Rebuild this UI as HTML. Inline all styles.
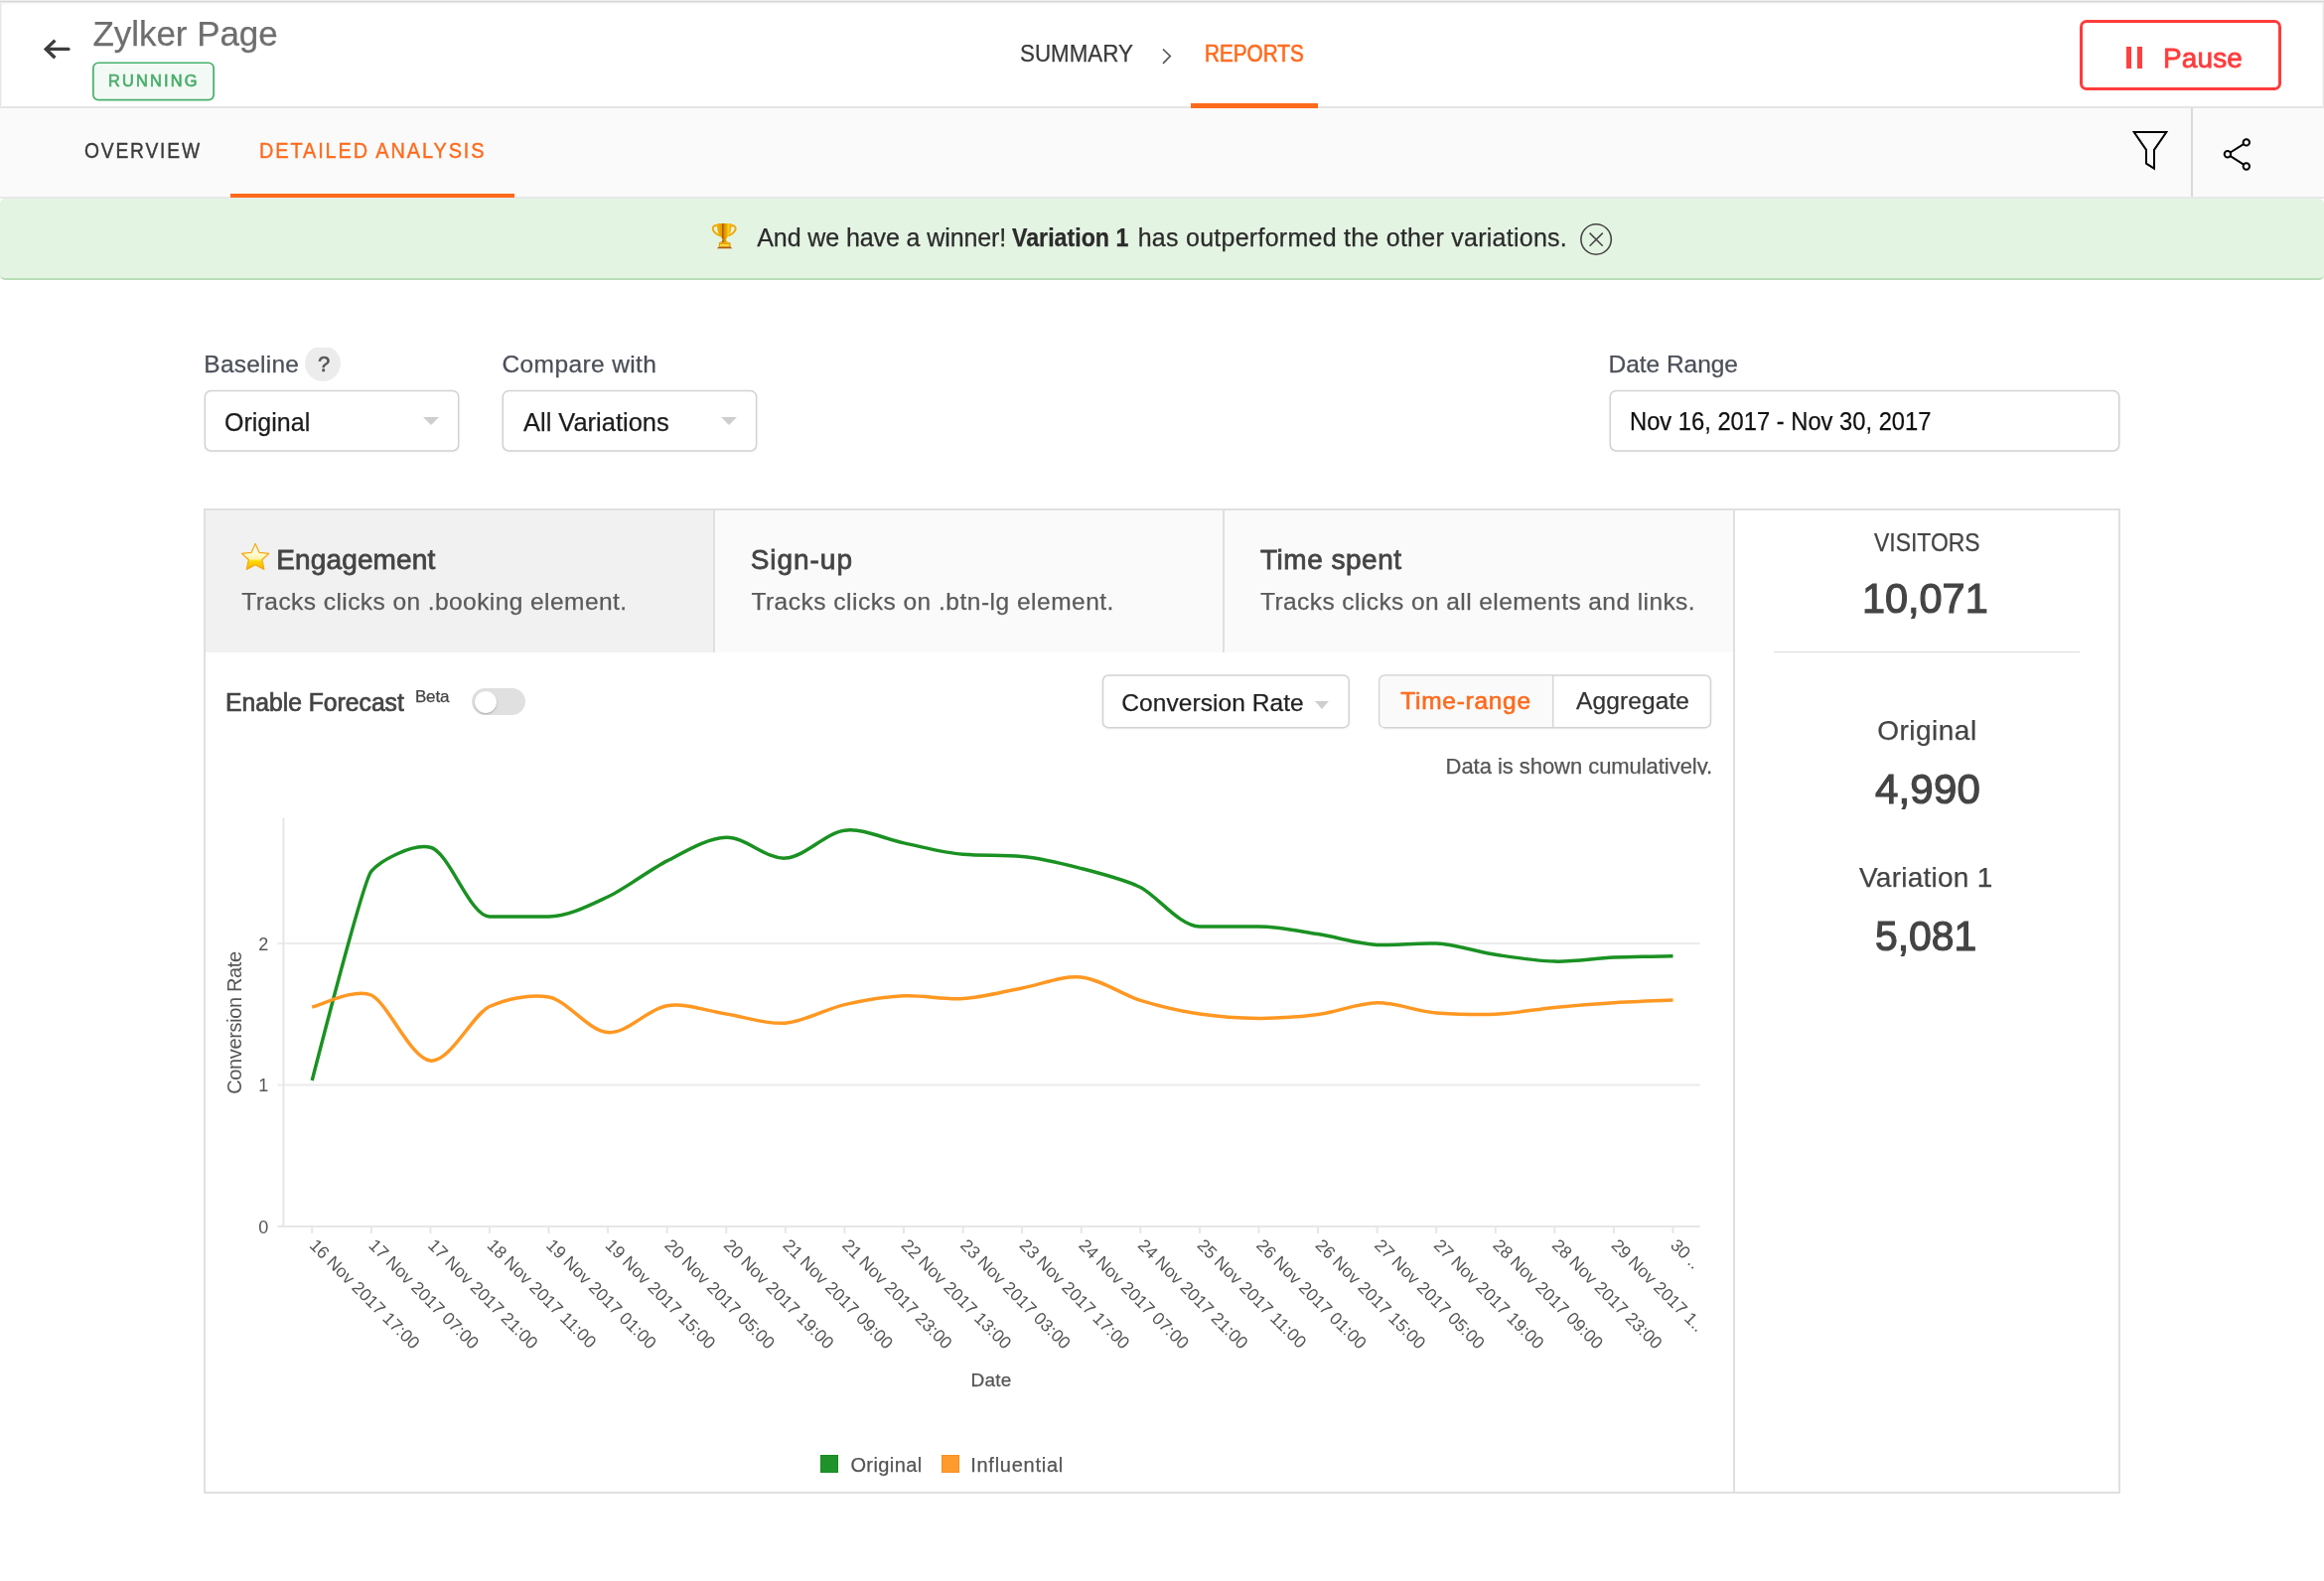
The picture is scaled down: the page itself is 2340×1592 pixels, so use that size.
<!DOCTYPE html>
<html lang="en">
<head>
<meta charset="utf-8">
<title>Zylker Page - Reports</title>
<style>
html,body{margin:0;padding:0;}
body{will-change:transform;width:2340px;height:1592px;position:relative;overflow:hidden;background:#fff;font-family:"Liberation Sans",Arial,sans-serif;}
.t{position:absolute;white-space:nowrap;line-height:1;transform-origin:0 50%;-webkit-text-stroke:0.25px currentColor;}
.m{-webkit-text-stroke:0.75px currentColor;}
.abs{position:absolute;}
header{position:absolute;left:0;top:0;width:2340px;height:107px;background:#fff;}
.topline{position:absolute;left:0;top:0;width:2340px;height:5px;background:linear-gradient(to bottom,#efefef 0,#efefef 1px,#d5d5d5 1px,#d5d5d5 2px,#ebebeb 2px,#ebebeb 3px,#f8f8f8 3px,#f8f8f8 4px,#fdfdfd 4px);}
.leftline{position:absolute;left:0;top:2px;width:2px;height:106px;background:linear-gradient(to right,#e6e6e6 0,#e6e6e6 1px,#f6f6f6 1px);}
.rightline{position:absolute;left:2338px;top:2px;width:2px;height:106px;background:linear-gradient(to left,#e6e6e6 0,#e6e6e6 1px,#f6f6f6 1px);}
.hborder{position:absolute;left:0;top:107px;width:2340px;height:2px;background:#e4e4e4;}
.hl{position:absolute;background:#ff6a1c;}
.pausebtn{position:absolute;left:2094px;top:20px;width:197px;height:65px;border:3px solid #ff3b3b;border-radius:7px;background:#fff;}
.pbar{position:absolute;top:47.2px;width:5px;height:21.5px;background:#ff4040;}
nav.sub{position:absolute;left:0;top:109px;width:2340px;height:89px;background:#fafafa;}
.subborder{position:absolute;left:0;top:198px;width:2340px;height:1.5px;background:#e8e8e8;}
.vdiv{position:absolute;left:2206px;top:109px;width:2px;height:89px;background:#d9d9d9;}
.banner{position:absolute;left:0;top:199.5px;width:2340px;height:80.5px;background:#e4f4e3;border-bottom:2px solid #b9deb6;border-radius:5px;}
.sel{position:absolute;box-sizing:border-box;border:2px solid #dcdcdc;border-radius:7px;background:#fff;box-shadow:0 1px 2px rgba(0,0,0,.06);}
.caret{position:absolute;width:0;height:0;border-left:8px solid transparent;border-right:8px solid transparent;border-top:8.5px solid #cecece;}
.qc{position:absolute;left:307px;top:350.4px;width:36px;height:34px;overflow:hidden;}
.qc i{position:absolute;left:0;top:-2.4px;width:36px;height:36px;border-radius:50%;background:#ececec;}
.card{position:absolute;left:205px;top:512px;width:1926px;height:988px;border:2px solid #e0e0df;background:#fff;}
.tab{position:absolute;top:514px;height:143px;background:#fafafa;}
.tab.on{background:#f1f1f1;}
.tdiv{position:absolute;width:2px;background:#e0e0df;}
.hr{position:absolute;left:1786px;top:655.5px;width:308px;height:1.5px;background:#dcdcdc;}
.toggle{position:absolute;left:475px;top:692.5px;width:54px;height:27px;border-radius:14px;background:#e0e0e0;}
.knob{position:absolute;left:478px;top:695.8px;width:22.4px;height:22.4px;border-radius:50%;background:#fff;box-shadow:0 1px 2px rgba(0,0,0,.25);}
.bgroup{position:absolute;left:1388px;top:679px;width:335px;height:55px;box-sizing:border-box;border:2px solid #dcdcdc;border-radius:6px;background:#fff;overflow:hidden;box-shadow:0 1px 2px rgba(0,0,0,.05);}
.bgroup .on{position:absolute;left:0;top:0;width:172.5px;height:51px;background:#fafafa;border-right:2px solid #dcdcdc;}
.clip{position:absolute;left:1440px;top:750px;width:300px;height:29.5px;overflow:hidden;}
svg.chart{position:absolute;left:207px;top:780px;}
.lg{position:absolute;top:1465.2px;width:16px;height:16px;border:1px solid;}
svg.ico{position:absolute;left:0;top:0;overflow:visible;}
svg.boxes{filter:drop-shadow(0 1px 0.8px rgba(0,0,0,.04));}
</style>
</head>
<body>

<header>
  <svg class="ico" width="120" height="108" viewBox="0 0 120 108"><path d="M55.4 40.6 L46.3 49.4 L55.4 58.2" fill="none" stroke="#3d3d3d" stroke-width="3.4" stroke-linecap="butt" stroke-linejoin="miter"/><path d="M47 49.4 H68.9" fill="none" stroke="#3d3d3d" stroke-width="3.4" stroke-linecap="round"/></svg>
  <h1 style="margin:0;font-weight:normal"><span class="t" style="left:93.5px;top:16px;font-size:35px;color:#6e6e6e;letter-spacing:-0.05px;">Zylker Page</span></h1>
  <svg class="ico" width="300" height="108"><rect x="93.85" y="63.25" width="121.3" height="37.3" rx="5.2" fill="#f3f9f4" stroke="#47b06b" stroke-width="1.7"/></svg><span class="t" style="left:109.1px;top:73px;font-size:16.5px;color:#46ae69;letter-spacing:2.20px;transform:scaleX(0.9914);-webkit-text-stroke-width:0.65px;">RUNNING</span>
  <nav>
    <span class="t" style="left:1026.5px;top:43px;font-size:23.5px;color:#3a3a3a;transform:scaleX(0.9511);">SUMMARY</span>
    <svg class="ico" width="2340" height="108"><path d="M1171 49.5 L1178.2 56.5 L1171 63.8" fill="none" stroke="#555" stroke-width="1.7"/></svg>
    <span class="t" style="left:1212.8px;top:43px;font-size:23.5px;color:#ff6a1c;transform:scaleX(0.8816);-webkit-text-stroke-width:0.6px;">REPORTS</span>
    <div class="hl" style="left:1199px;top:104px;width:128px;height:5px;z-index:3"></div>
  </nav>
  <div class="pausebtn"></div>
  <div class="pbar" style="left:2140.9px"></div><div class="pbar" style="left:2152px"></div>
  <span class="t m" style="left:2178.0px;top:45px;font-size:28px;color:#ff3b3b;letter-spacing:0.12px;-webkit-text-stroke-width:0.78px;">Pause</span>
</header>
<div class="hborder"></div>
<div class="topline"></div>
<div class="leftline"></div><div class="rightline"></div>

<nav class="sub"></nav>
<div class="subborder"></div>
<span class="t" style="left:85.3px;top:141px;font-size:22px;color:#3a3a3a;letter-spacing:2.10px;transform:scaleX(0.8735);-webkit-text-stroke-width:0.4px;">OVERVIEW</span><span class="t" style="left:260.7px;top:141px;font-size:22px;color:#ff6a1c;letter-spacing:2.10px;transform:scaleX(0.9045);-webkit-text-stroke-width:0.4px;">DETAILED ANALYSIS</span>
<div class="hl" style="left:232px;top:194.5px;width:286px;height:4px"></div>
<div class="vdiv"></div>
<svg class="ico" width="2340" height="200">
  <path d="M2148.7 133 H2181.3 L2169 150.9 V169.6 L2161 164.6 V150.9 Z" fill="none" stroke="#000" stroke-width="2" stroke-linejoin="miter"/>
  <g fill="none" stroke="#000" stroke-width="2">
    <path d="M2259 145.1 L2245.7 153.5 M2245.7 157.1 L2259 165.7"/>
    <circle cx="2261.8" cy="143.4" r="3.2"/><circle cx="2242.9" cy="155.3" r="3.2"/><circle cx="2261.8" cy="167.5" r="3.2"/>
  </g>
</svg>

<section class="banner"></section>
<svg class="ico" width="2340" height="300">
  <defs>
    <linearGradient id="cup" x1="0" x2="1" y1="0" y2="0"><stop offset="0" stop-color="#f4b400"/><stop offset=".33" stop-color="#e79c00"/><stop offset=".4" stop-color="#8f4500"/><stop offset=".47" stop-color="#d88c00"/><stop offset=".62" stop-color="#e9a200"/><stop offset=".8" stop-color="#ffcd1c"/><stop offset="1" stop-color="#eca600"/></linearGradient>
    <linearGradient id="base" x1="0" x2="0" y1="0" y2="1"><stop offset="0" stop-color="#e39a00"/><stop offset=".45" stop-color="#ffd43a"/><stop offset="1" stop-color="#a84a00"/></linearGradient>
    <linearGradient id="star" x1="0" x2="0" y1="0" y2="1"><stop offset="0" stop-color="#fffef4"/><stop offset=".45" stop-color="#fffbcc"/><stop offset=".6" stop-color="#fff3a2"/><stop offset=".67" stop-color="#ffda00"/><stop offset=".85" stop-color="#ffc600"/><stop offset="1" stop-color="#f3a300"/></linearGradient>
  </defs>
  <g>
    <path d="M722.6 227.4 C719.6 226.3 717.1 228.2 717.8 230.9 C718.5 233.5 721.2 235.7 724.8 237.2" fill="none" stroke="#efa800" stroke-width="1.9" stroke-linecap="round"/>
    <path d="M735.8 227.4 C738.8 226.3 741.3 228.2 740.6 230.9 C739.9 233.5 737.2 235.7 733.6 237.2" fill="none" stroke="#efa800" stroke-width="1.9" stroke-linecap="round"/>
    <path d="M722.1 225 H736.3 C736.6 230.6 736.1 234.6 733.7 237.4 C732.4 238.9 731.3 239.9 731 241.2 C730.9 242.4 732.6 243.5 735.2 244.4 H723.8 C726.2 243.5 727.7 242.4 727.5 241.2 C727.2 239.9 726.1 238.9 724.8 237.4 C722.4 234.6 721.9 230.6 722.1 225 Z" fill="url(#cup)"/>
    <path d="M723.8 244.3 H735.5 V248.5 H723.8 Z" fill="#e99e00"/>
    <path d="M725 245.9 H734 V248.3 H725 Z" fill="#ffd838"/>
    <path d="M723.6 248.4 H735.7 L737.3 250.3 H721.8 Z" fill="#b25a00"/>
  </g>
  <g fill="none" stroke="#454545" stroke-width="1.6">
    <circle cx="1607.1" cy="241" r="15.2"/>
    <path d="M1600.6 234.6 L1613.8 247.8 M1613.8 234.6 L1600.6 247.8" stroke-width="1.5"/>
  </g>
</svg>
<span class="t" style="left:762.3px;top:227px;font-size:25px;color:#2b2b2b;letter-spacing:-0.10px;">And we have a winner!</span><span class="t" style="left:1019.3px;top:227px;font-size:25px;color:#2b2b2b;transform:scaleX(0.9286);font-weight:700;">Variation 1</span><span class="t" style="left:1145.7px;top:227px;font-size:25px;color:#2b2b2b;letter-spacing:0.26px;">has outperformed the other variations.</span>

<main>
<svg class="ico boxes" width="2340" height="800">
    <g fill="#fff" stroke="#d2d2d2" stroke-width="1.5">
      <rect x="206.4" y="393.5" width="255.3" height="60.4" rx="6"/>
      <rect x="506.3" y="393.5" width="255.3" height="60.4" rx="6"/>
      <rect x="1621.3" y="393.5" width="512.4" height="60.4" rx="6"/>
    </g>
  </svg>
  <span class="t" style="left:205.3px;top:355px;font-size:24.5px;color:#4a4f58;letter-spacing:0.24px;">Baseline</span><div class="qc"><i></i></div><span class="t" style="left:319.9px;top:356px;font-size:22px;color:#555;-webkit-text-stroke-width:0.6px;">?</span>
  <span class="t" style="left:505.5px;top:355px;font-size:24.5px;color:#4a4f58;letter-spacing:0.39px;">Compare with</span><span class="t" style="left:1619.5px;top:355px;font-size:24.5px;color:#4a4f58;letter-spacing:-0.03px;">Date Range</span>
  <span class="t" style="left:225.8px;top:412px;font-size:26px;color:#1c1c1c;transform:scaleX(0.9623);">Original</span>
  <div class="caret" style="left:426px;top:419.5px"></div>
  <span class="t" style="left:526.9px;top:412px;font-size:26px;color:#1c1c1c;transform:scaleX(0.9793);">All Variations</span>
  <div class="caret" style="left:726px;top:419.5px"></div>
  <span class="t" style="left:1640.8px;top:412px;font-size:25px;color:#111;transform:scaleX(0.9493);">Nov 16, 2017 - Nov 30, 2017</span>

  <div class="card"></div>
  <div class="tab on" style="left:207px;width:511px"></div>
  <div class="tab" style="left:720px;width:511px"></div>
  <div class="tab" style="left:1233px;width:512px"></div>
  <div class="tdiv" style="left:718px;top:514px;height:143px"></div>
  <div class="tdiv" style="left:1231px;top:514px;height:143px"></div>
  <div class="tdiv" style="left:1745px;top:514px;height:988px"></div>
  <svg class="ico" width="400" height="600"><path d="M257.1 547.4 L261 556.3 L270.7 557.3 L263.9 563.8 L265.9 573.4 L257.1 568.8 L248.3 573.4 L250.3 563.8 L243.5 557.3 L253.2 556.3 Z" fill="url(#star)" stroke="#f6a712" stroke-width="1.2" stroke-linejoin="round"/></svg>
  <span class="t m" style="left:278.3px;top:550px;font-size:28px;color:#444;letter-spacing:0.13px;-webkit-text-stroke-width:0.78px;">Engagement</span><span class="t" style="left:243.3px;top:594px;font-size:24.5px;color:#5a5a5a;letter-spacing:0.43px;">Tracks clicks on .booking element.</span><span class="t m" style="left:755.7px;top:550px;font-size:28px;color:#444;letter-spacing:0.96px;-webkit-text-stroke-width:0.78px;">Sign-up</span><span class="t" style="left:756.4px;top:594px;font-size:24.5px;color:#5a5a5a;letter-spacing:0.50px;">Tracks clicks on .btn-lg element.</span><span class="t m" style="left:1269.0px;top:550px;font-size:28px;color:#444;letter-spacing:0.51px;-webkit-text-stroke-width:0.78px;">Time spent</span><span class="t" style="left:1269.0px;top:594px;font-size:24.5px;color:#5a5a5a;letter-spacing:0.42px;">Tracks clicks on all elements and links.</span>

  <aside>
    <span class="t" style="left:1887.2px;top:534px;font-size:25px;color:#444;transform:scaleX(0.9173);">VISITORS</span><span class="t m" style="left:1875.0px;top:582px;font-size:42px;color:#444;transform:scaleX(0.9863);-webkit-text-stroke-width:1.18px;">10,071</span><div class="hr"></div><span class="t" style="left:1890.2px;top:722px;font-size:28px;color:#444;letter-spacing:0.49px;">Original</span><span class="t m" style="left:1887.9px;top:774px;font-size:42px;color:#444;letter-spacing:0.21px;-webkit-text-stroke-width:1.18px;">4,990</span><span class="t" style="left:1872.0px;top:870px;font-size:28px;color:#444;letter-spacing:0.25px;">Variation 1</span><span class="t m" style="left:1887.9px;top:922px;font-size:42px;color:#444;transform:scaleX(0.9733);-webkit-text-stroke-width:1.18px;">5,081</span>
  </aside>

  <svg class="ico boxes" width="2340" height="800">
    <g fill="#fff" stroke="#d2d2d2" stroke-width="1.5">
      <rect x="1110.5" y="680" width="247.7" height="52.7" rx="5.5"/>
      <rect x="1388.8" y="680" width="333.6" height="52.7" rx="5.5"/>
    </g>
    <path d="M1394.3 680.75 H1563 V731.95 H1394.3 Q1389.55 731.95 1389.55 727.2 V685.5 Q1389.55 680.75 1394.3 680.75 Z" fill="#fafafa"/>
    <path d="M1563.7 680 V732.7" stroke="#d6d6d6" stroke-width="1.5"/>
  </svg>
  <span class="t m" style="left:227.3px;top:695px;font-size:25px;color:#444;transform:scaleX(0.9878);-webkit-text-stroke-width:0.70px;">Enable Forecast</span><span class="t" style="left:417.9px;top:693px;font-size:17px;color:#444;letter-spacing:-0.14px;">Beta</span>
  <div class="toggle"></div><div class="knob"></div>
  <span class="t" style="left:1129.3px;top:696px;font-size:24.5px;color:#222;letter-spacing:0.06px;">Conversion Rate</span>
  <div class="caret" style="left:1323.5px;top:705.5px;border-left-width:7.7px;border-right-width:7.7px;border-top-width:8px"></div>
  <span class="t" style="left:1410.3px;top:694px;font-size:24.5px;color:#ff6a1c;letter-spacing:0.71px;-webkit-text-stroke-width:0.6px;">Time-range</span><span class="t" style="left:1587.1px;top:694px;font-size:24.5px;color:#333;letter-spacing:0.10px;">Aggregate</span>
  <div class="clip"><div style="position:absolute;left:-1440px;top:-750px"><span class="t" style="left:1455.6px;top:761px;font-size:22px;color:#555;letter-spacing:-0.05px;">Data is shown cumulatively.</span></div></div>

<svg class="chart" width="1538" height="722" viewBox="207 780 1538 722" font-family="Liberation Sans, Arial, sans-serif">
<g stroke="#ebebeb" stroke-width="2" fill="none">
<line x1="279.4" y1="1092.5" x2="1711.6" y2="1092.5"/>
<line x1="279.4" y1="950.1" x2="1711.6" y2="950.1"/>
</g>
<g stroke="#e6e6e6" stroke-width="2" fill="none">
<path d="M285.4,823.4 V1234.9 H1711.6"/>
<line x1="279.4" y1="1234.9" x2="285.4" y2="1234.9"/>
<line x1="314.2" y1="1234.9" x2="314.2" y2="1241.9"/>
<line x1="373.8" y1="1234.9" x2="373.8" y2="1241.9"/>
<line x1="433.4" y1="1234.9" x2="433.4" y2="1241.9"/>
<line x1="492.9" y1="1234.9" x2="492.9" y2="1241.9"/>
<line x1="552.5" y1="1234.9" x2="552.5" y2="1241.9"/>
<line x1="612.1" y1="1234.9" x2="612.1" y2="1241.9"/>
<line x1="671.7" y1="1234.9" x2="671.7" y2="1241.9"/>
<line x1="731.2" y1="1234.9" x2="731.2" y2="1241.9"/>
<line x1="790.8" y1="1234.9" x2="790.8" y2="1241.9"/>
<line x1="850.4" y1="1234.9" x2="850.4" y2="1241.9"/>
<line x1="910.0" y1="1234.9" x2="910.0" y2="1241.9"/>
<line x1="969.6" y1="1234.9" x2="969.6" y2="1241.9"/>
<line x1="1029.1" y1="1234.9" x2="1029.1" y2="1241.9"/>
<line x1="1088.7" y1="1234.9" x2="1088.7" y2="1241.9"/>
<line x1="1148.3" y1="1234.9" x2="1148.3" y2="1241.9"/>
<line x1="1207.9" y1="1234.9" x2="1207.9" y2="1241.9"/>
<line x1="1267.5" y1="1234.9" x2="1267.5" y2="1241.9"/>
<line x1="1327.0" y1="1234.9" x2="1327.0" y2="1241.9"/>
<line x1="1386.6" y1="1234.9" x2="1386.6" y2="1241.9"/>
<line x1="1446.2" y1="1234.9" x2="1446.2" y2="1241.9"/>
<line x1="1505.8" y1="1234.9" x2="1505.8" y2="1241.9"/>
<line x1="1565.3" y1="1234.9" x2="1565.3" y2="1241.9"/>
<line x1="1624.9" y1="1234.9" x2="1624.9" y2="1241.9"/>
<line x1="1684.5" y1="1234.9" x2="1684.5" y2="1241.9"/>
</g>
<path d="M314.2,1088C314.9,1085.4,365.6,887.2,373.8,877.4S414.5,848.9,433.4,853.3S473.1,922.9,492.9,922.9S532.7,922.9,552.5,922.9S595.8,910.6,612.1,903S655.8,874.9,671.7,866.9S711.4,843.7,731.2,843.2S771,865.3,790.8,864.1S830.9,838.7,850.4,836.2S890.9,845,910,848.9S949.8,858.8,969.6,860.3S1009.4,860.9,1029.1,862.5S1070.1,869.7,1088.7,874.5S1132.3,885.6,1148.3,893.5S1188,933,1207.9,933S1247.6,933,1267.5,933S1307.6,937.6,1327,940.6S1366.8,950.5,1386.6,951.4S1426.4,949.2,1446.2,950.1S1486.3,958.4,1505.8,961.3S1545.5,967.6,1565.3,968.1S1605.1,965,1624.9,964.1S1674.6,963,1684.5,962.8" fill="none" stroke="#1a9122" stroke-width="3.5"/>
<path d="M314.2,1014C323.7,1012.1,357.3,994.5,373.8,1002S413.7,1066.2,433.4,1068.1S476.3,1020.9,492.9,1013.5S533.3,1000.5,552.5,1004S592.3,1038.2,612.1,1039.6S652.3,1015.7,671.7,1012.7S711.8,1018.1,731.2,1021S771.1,1031.8,790.8,1030.2S831.5,1015.9,850.4,1011.6S890.2,1003.8,910,1002.8S949.8,1006.8,969.6,1005.5S1009.9,998.5,1029.1,995S1069.1,982,1088.7,984S1130.2,1001.8,1148.3,1007.4S1188.5,1018.1,1207.9,1021S1247.6,1025.3,1267.5,1025.4S1307.5,1024.2,1327,1021.6S1366.8,1010,1386.6,1009.7S1426.4,1018.7,1446.2,1019.9S1485.9,1021.8,1505.8,1021.2S1545.7,1016.3,1565.3,1014.4S1605.1,1010.9,1624.9,1009.7S1674.6,1007.4,1684.5,1007" fill="none" stroke="#ff9822" stroke-width="3.5"/>
<g fill="#555" font-size="18">
<text x="270.3" y="1241.6" text-anchor="end">0</text>
<text x="270.3" y="1099.2" text-anchor="end">1</text>
<text x="270.3" y="956.8" text-anchor="end">2</text>
</g>
<g fill="#555" font-size="17.5">
<text transform="translate(310.7,1254.9) rotate(45)">16 Nov 2017 17:00</text>
<text transform="translate(370.3,1254.9) rotate(45)">17 Nov 2017 07:00</text>
<text transform="translate(429.9,1254.9) rotate(45)">17 Nov 2017 21:00</text>
<text transform="translate(489.4,1254.9) rotate(45)">18 Nov 2017 11:00</text>
<text transform="translate(549.0,1254.9) rotate(45)">19 Nov 2017 01:00</text>
<text transform="translate(608.6,1254.9) rotate(45)">19 Nov 2017 15:00</text>
<text transform="translate(668.2,1254.9) rotate(45)">20 Nov 2017 05:00</text>
<text transform="translate(727.7,1254.9) rotate(45)">20 Nov 2017 19:00</text>
<text transform="translate(787.3,1254.9) rotate(45)">21 Nov 2017 09:00</text>
<text transform="translate(846.9,1254.9) rotate(45)">21 Nov 2017 23:00</text>
<text transform="translate(906.5,1254.9) rotate(45)">22 Nov 2017 13:00</text>
<text transform="translate(966.1,1254.9) rotate(45)">23 Nov 2017 03:00</text>
<text transform="translate(1025.6,1254.9) rotate(45)">23 Nov 2017 17:00</text>
<text transform="translate(1085.2,1254.9) rotate(45)">24 Nov 2017 07:00</text>
<text transform="translate(1144.8,1254.9) rotate(45)">24 Nov 2017 21:00</text>
<text transform="translate(1204.4,1254.9) rotate(45)">25 Nov 2017 11:00</text>
<text transform="translate(1264.0,1254.9) rotate(45)">26 Nov 2017 01:00</text>
<text transform="translate(1323.5,1254.9) rotate(45)">26 Nov 2017 15:00</text>
<text transform="translate(1383.1,1254.9) rotate(45)">27 Nov 2017 05:00</text>
<text transform="translate(1442.7,1254.9) rotate(45)">27 Nov 2017 19:00</text>
<text transform="translate(1502.3,1254.9) rotate(45)">28 Nov 2017 09:00</text>
<text transform="translate(1561.8,1254.9) rotate(45)">28 Nov 2017 23:00</text>
<text transform="translate(1621.4,1254.9) rotate(45)">29 Nov 2017 1..</text>
<text transform="translate(1681.0,1254.9) rotate(45)">30 ..</text>
</g>
<text transform="translate(243,1029.8) rotate(-90)" text-anchor="middle" font-size="20" fill="#555" textLength="144" lengthAdjust="spacing">Conversion Rate</text>
</svg>
  <span class="t" style="left:977.6px;top:1380px;font-size:19px;color:#555;letter-spacing:0.21px;">Date</span>
  <div class="lg" style="left:826px;background:#1f9329;border-color:#178a20"></div><span class="t" style="left:856.4px;top:1465px;font-size:20px;color:#555;letter-spacing:0.42px;">Original</span>
  <div class="lg" style="left:948px;background:#ff9a2c;border-color:#f79020"></div><span class="t" style="left:977.2px;top:1465px;font-size:20px;color:#555;letter-spacing:0.74px;">Influential</span>
</main>
</body>
</html>
